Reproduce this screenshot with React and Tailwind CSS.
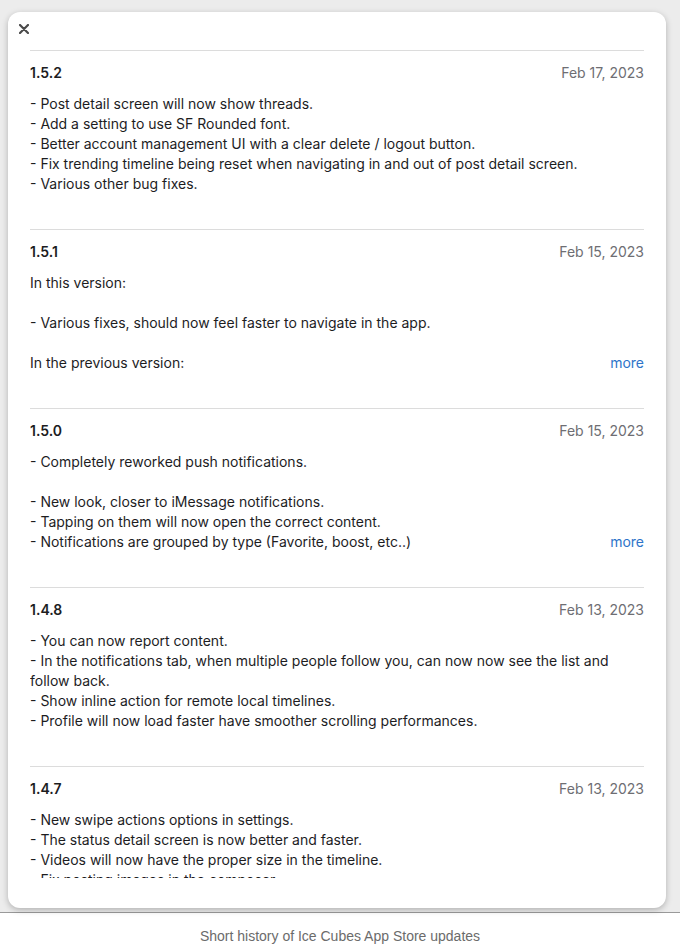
import React from 'react';

const releases = [
  {
    version: '1.5.2',
    date: 'Feb 17, 2023',
    notes: [
      '- Post detail screen will now show threads.',
      '- Add a setting to use SF Rounded font.',
      '- Better account management UI with a clear delete / logout button.',
      '- Fix trending timeline being reset when navigating in and out of post detail screen.',
      '- Various other bug fixes.',
    ],
  },
  {
    version: '1.5.1',
    date: 'Feb 15, 2023',
    more: true,
    notes: [
      'In this version:',
      '',
      '- Various fixes, should now feel faster to navigate in the app.',
      '',
      'In the previous version:',
    ],
  },
  {
    version: '1.5.0',
    date: 'Feb 15, 2023',
    more: true,
    notes: [
      '- Completely reworked push notifications.',
      '',
      '- New look, closer to iMessage notifications.',
      '- Tapping on them will now open the correct content.',
      '- Notifications are grouped by type (Favorite, boost, etc..)',
    ],
  },
  {
    version: '1.4.8',
    date: 'Feb 13, 2023',
    notes: [
      '- You can now report content.',
      '- In the notifications tab, when multiple people follow you, can now now see the list and follow back.',
      '- Show inline action for remote local timelines.',
      '- Profile will now load faster have smoother scrolling performances.',
    ],
  },
  {
    version: '1.4.7',
    date: 'Feb 13, 2023',
    notes: [
      '- New swipe actions options in settings.',
      '- The status detail screen is now better and faster.',
      '- Videos will now have the proper size in the timeline.',
      '- Fix posting images in the composer.',
    ],
  },
];

const Release = ({ release }) => (
  <div className="border-t border-[#dcdcdc] pt-3 pb-[35px]">
    <div className="flex justify-between items-center h-5 leading-5">
      <span className="font-semibold text-[#1d1d1f]">{release.version}</span>
      <span className="text-[#6e6e73]">{release.date}</span>
    </div>
    <div className="relative mt-[11px] h-[100px] overflow-hidden">
      {release.notes.map((line, i) => (
        <p key={i} className="leading-5 min-h-5 text-[#1d1d1f]">{line}</p>
      ))}
      {release.more && (
        <span className="absolute right-0 top-[80px] leading-5 pl-6 bg-white text-[#2e74c9]">more</span>
      )}
    </div>
  </div>
);

const App = () => {
  return (
    <div className="w-[680px] h-[944px] bg-white font-['Inter','Liberation_Sans',sans-serif] overflow-hidden">
      <div className="h-[913px] bg-[#ececec] pt-3 pl-2 pr-[14px] pb-[4px] border-b border-[#9a9a9a]">
        <div className="h-[896px] bg-white rounded-xl shadow-[0_2px_6px_rgba(0,0,0,0.25)] flex flex-col text-[14px]">
          <div className="h-[38px] pl-[11px] pt-[12px]">
            <svg width="10" height="10" viewBox="0 0 10 10">
              <path d="M1 1 L9 9 M9 1 L1 9" stroke="#4a4a4a" strokeWidth="2.2" strokeLinecap="round" />
            </svg>
          </div>
          <div className="mx-[22px] h-[828px] overflow-hidden">
            {releases.map((r) => (
              <Release key={r.version} release={r} />
            ))}
          </div>
        </div>
      </div>
      <p className="text-center text-[14px] text-[#6b6b6b] mt-[13px] font-['Liberation_Sans',sans-serif]">
        Short history of Ice Cubes App Store updates
      </p>
    </div>
  );
};

export default App;
